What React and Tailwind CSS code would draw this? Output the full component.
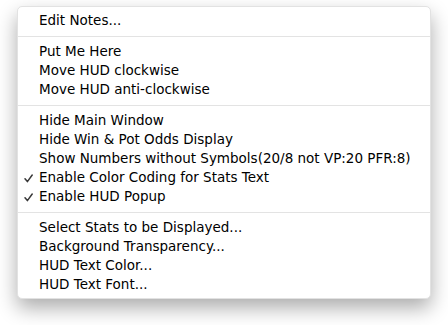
const groups = [
  [{ label: "Edit Notes..." }],
  [
    { label: "Put Me Here" },
    { label: "Move HUD clockwise" },
    { label: "Move HUD anti-clockwise" },
  ],
  [
    { label: "Hide Main Window" },
    { label: "Hide Win & Pot Odds Display" },
    { label: "Show Numbers without Symbols(20/8 not VP:20 PFR:8)" },
    { label: "Enable Color Coding for Stats Text", checked: true },
    { label: "Enable HUD Popup", checked: true },
  ],
  [
    { label: "Select Stats to be Displayed..." },
    { label: "Background Transparency..." },
    { label: "HUD Text Color..." },
    { label: "HUD Text Font..." },
  ],
];

const MenuItem = ({ label, checked }) => (
  <div className="relative h-[19px] flex items-center pl-[21px] text-black">
    {checked && (
      <svg
        className="absolute left-[6px] top-[6px]"
        width="9"
        height="9"
        viewBox="0 0 9 9"
      >
        <path
          d="M1 4.8 L3.4 7.6 L8.2 1"
          fill="none"
          stroke="#383838"
          strokeWidth="1.5"
          strokeLinecap="round"
          strokeLinejoin="round"
        />
      </svg>
    )}
    {label}
  </div>
);

export default function App() {
  return (
    <div className="w-[448px] h-[325px] bg-white pt-[6px] pl-[17px]">
      <div
        className="w-[414px] bg-white rounded-[5px] border border-[#e2e2e2] py-[4px] shadow-[0_9px_20px_rgba(0,0,0,0.33)] text-[13.5px] leading-[19px]"
        style={{ fontFamily: '"DejaVu Sans", sans-serif' }}
      >
        {groups.map((group, i) => (
          <div key={i}>
            {i > 0 && <div className="h-px bg-[#e3e3e3] mt-[6px] mb-[5px]" />}
            {group.map((item) => (
              <MenuItem key={item.label} {...item} />
            ))}
          </div>
        ))}
      </div>
    </div>
  );
}
